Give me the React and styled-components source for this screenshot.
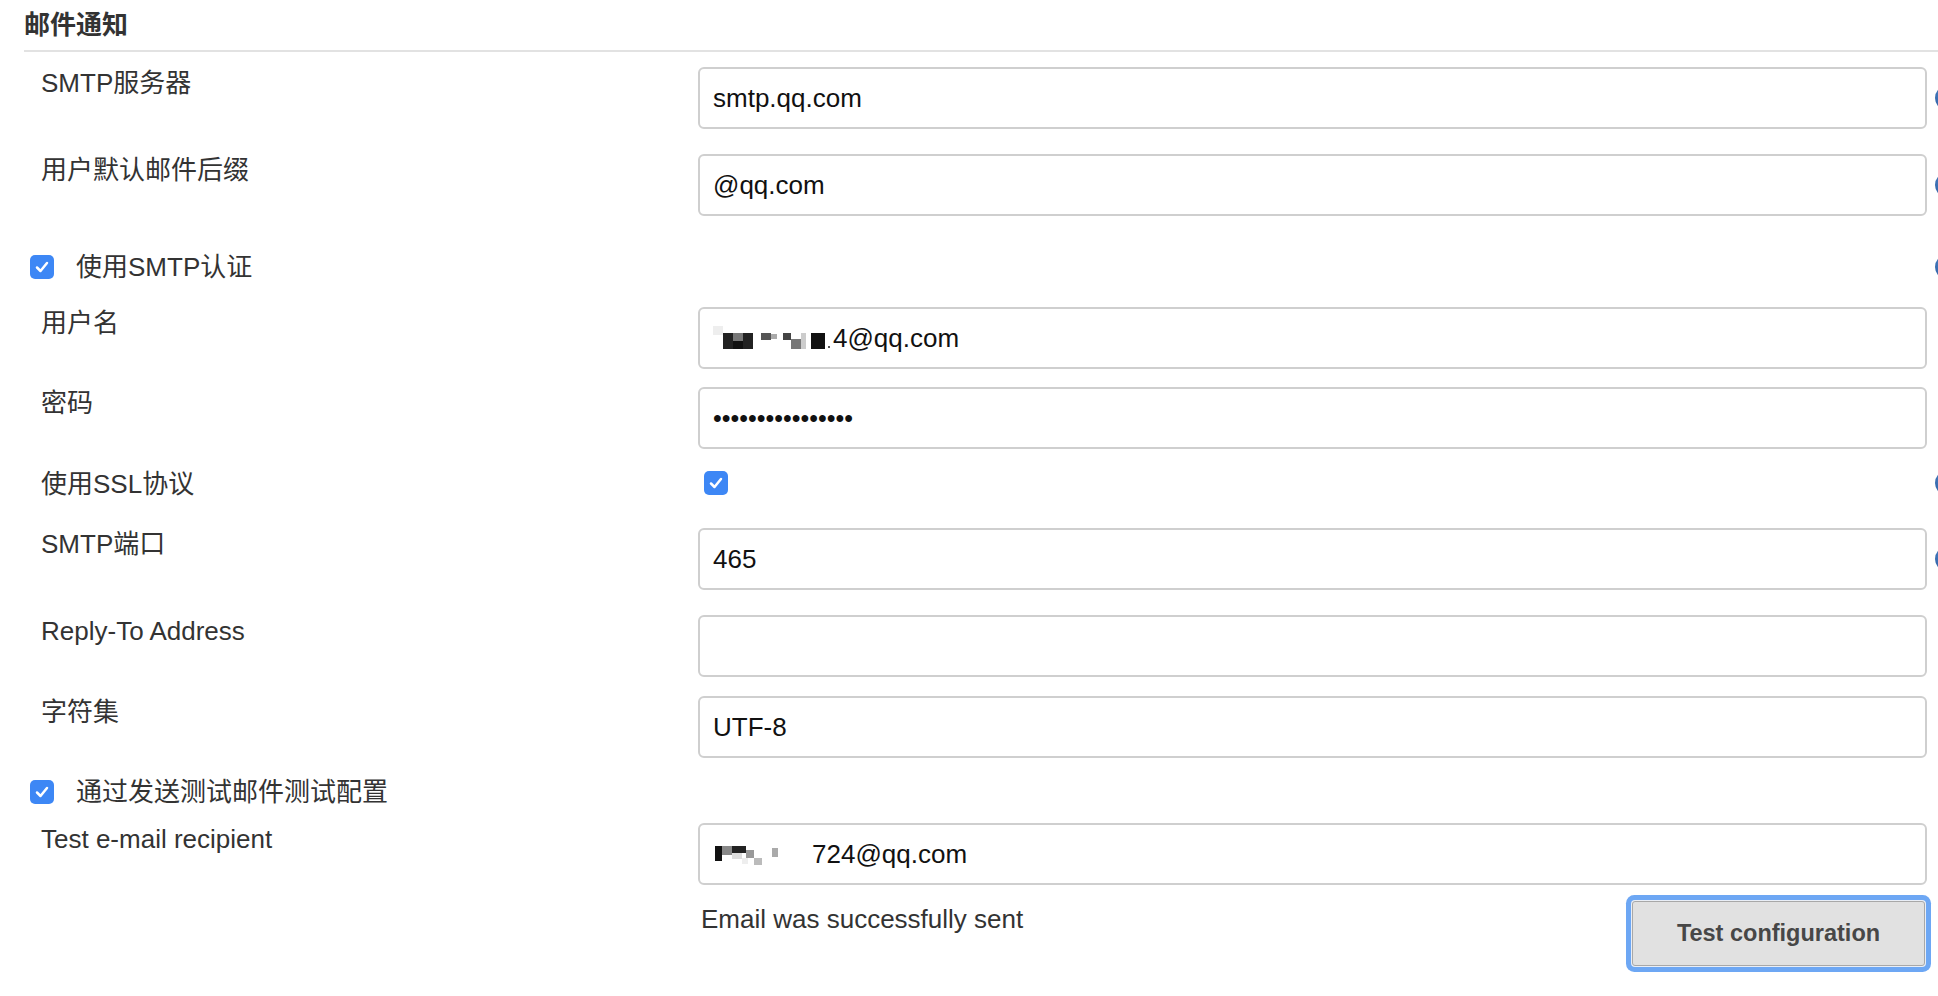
import React from 'react';
import styled, { createGlobalStyle } from 'styled-components';

const GlobalStyle = createGlobalStyle`
  html, body {
    margin: 0;
    padding: 0;
    background: #fff;
    overflow: hidden;
  }
  body {
    font-family: "Liberation Sans", "Noto Sans CJK SC", sans-serif;
    color: #333;
  }
`;

const Page = styled.div`
  width: 100%;
  padding: 0 0 40px 24px;
  box-sizing: border-box;
  overflow: hidden;
`;

const SectionTitle = styled.div`
  font-size: 26px;
  font-weight: bold;
  line-height: 34px;
  color: #333;
  padding: 8px 0 8px 0;
  border-bottom: 2px solid #e2e2e2;
`;

const Form = styled.div`
  padding-top: 15px;
  width: 1961px;
`;

const Row = styled.div`
  display: grid;
  grid-template-columns: 674px 1229px 34px;
  align-items: start;
  margin-bottom: ${p => p.$mb || 0}px;
`;

const Label = styled.div`
  padding: 1px 0 0 17px;
  font-size: 26px;
  line-height: 30px;
  color: #333;
  white-space: nowrap;
`;

const CheckLabel = styled.label`
  display: flex;
  align-items: center;
  gap: 22px;
  height: 30px;
  padding-left: 6px;
  font-size: 26px;
  line-height: 30px;
  color: #333;
  white-space: nowrap;
`;

const CheckCell = styled.div`
  display: flex;
  align-items: center;
  height: 30px;
  padding-left: 6px;
`;

const Box = styled.span`
  display: inline-flex;
  align-items: center;
  justify-content: center;
  width: 24px;
  height: 24px;
  border-radius: 5px;
  background: #3d87f5;
  flex: none;
`;

const Field = styled.div`
  display: flex;
  align-items: center;
  height: 62px;
  box-sizing: border-box;
  border: 2px solid #cfcfcf;
  border-radius: 6px;
  padding: 0 13px;
  font-size: 26px;
  color: #111;
  white-space: nowrap;
`;

const Dots = styled.span`
  font-size: 25px;
`;

const HelpIcon = styled.span`
  display: block;
  width: 26px;
  height: 26px;
  margin: ${p => p.$top || 18}px 0 0 8px;
  border-radius: 50%;
  background: radial-gradient(circle at 40% 35%, #4f86c9, #1f4f93);
`;

const ActionCell = styled.div`
  display: flex;
  justify-content: space-between;
  align-items: flex-start;
  padding-left: 3px;
`;

const Message = styled.div`
  margin-top: 8px;
  font-size: 26px;
  line-height: 30px;
  color: #333;
`;

const Button = styled.button`
  margin-top: 5px;
  width: 293px;
  height: 65px;
  margin-right: 2px;
  border: 1px solid #a8a8a8;
  border-radius: 3px;
  background: #e1e1e1;
  box-shadow: 0 0 0 1px #e9eef6, 0 0 0 6px #6da7f4;
  font-family: "Liberation Sans", sans-serif;
  font-size: 23.5px;
  font-weight: bold;
  color: #474747;
  cursor: pointer;
`;

const Check = () => (
  <Box>
    <svg width="16" height="16" viewBox="0 0 16 16">
      <path d="M3 8.5 L6.5 12 L13 4" fill="none" stroke="#fff" strokeWidth="2.5" strokeLinecap="round" strokeLinejoin="round" />
    </svg>
  </Box>
);

// pixelated redaction in front of the mail addresses
const UserMosaic = () => (
  <svg width="118" height="24" viewBox="0 0 118 24" style={{ marginRight: 2 }}>
    <rect x="0" y="0" width="10" height="9" fill="#eee" />
    <rect x="10" y="7" width="10" height="16" fill="#222" />
    <rect x="20" y="7" width="10" height="8" fill="#777" />
    <rect x="20" y="15" width="10" height="8" fill="#111" />
    <rect x="30" y="7" width="10" height="16" fill="#222" />
    <rect x="48" y="7" width="10" height="7" fill="#555" />
    <rect x="58" y="8" width="6" height="5" fill="#aaa" />
    <rect x="70" y="7" width="8" height="7" fill="#444" />
    <rect x="78" y="13" width="10" height="10" fill="#777" />
    <rect x="88" y="7" width="5" height="16" fill="#ccc" />
    <rect x="98" y="7" width="14" height="16" fill="#111" />
    <rect x="115" y="20" width="2" height="2" fill="#555" />
  </svg>
);

const MailMosaic = () => (
  <svg width="98" height="24" viewBox="0 0 98 24" style={{ marginRight: 1 }}>
    <rect x="2" y="4" width="7" height="15" fill="#111" />
    <rect x="9" y="4" width="10" height="9" fill="#888" />
    <rect x="19" y="4" width="14" height="7" fill="#222" />
    <rect x="19" y="11" width="10" height="6" fill="#ddd" />
    <rect x="33" y="8" width="8" height="8" fill="#999" />
    <rect x="41" y="16" width="8" height="7" fill="#bbb" />
    <rect x="29" y="16" width="6" height="6" fill="#eee" />
    <rect x="59" y="6" width="6" height="9" fill="#aaa" />
  </svg>
);

const TextRow = ({ label, children, help, mb }) => (
  <Row $mb={mb}>
    <Label>{label}</Label>
    <Field>{children}</Field>
    {help ? <HelpIcon /> : <span />}
  </Row>
);

export default function App() {
  return (
    <>
      <GlobalStyle />
      <Page>
        <SectionTitle>邮件通知</SectionTitle>
        <Form>
          <TextRow label="SMTP服务器" help mb={25}>smtp.qq.com</TextRow>
          <TextRow label="用户默认邮件后缀" help mb={36}>@qq.com</TextRow>

          <Row $mb={25}>
            <CheckLabel><Check />使用SMTP认证</CheckLabel>
            <span />
            <HelpIcon $top={2} />
          </Row>

          <TextRow label="用户名" mb={18}><UserMosaic />4@qq.com</TextRow>
          <TextRow label="密码" mb={19}><Dots>••••••••••••••••</Dots></TextRow>

          <Row $mb={29}>
            <Label>使用SSL协议</Label>
            <CheckCell><Check /></CheckCell>
            <HelpIcon $top={2} />
          </Row>

          <TextRow label="SMTP端口" help mb={25}>465</TextRow>
          <TextRow label="Reply-To Address" mb={19} />
          <TextRow label="字符集" mb={19}>UTF-8</TextRow>

          <Row $mb={16}>
            <CheckLabel><Check />通过发送测试邮件测试配置</CheckLabel>
          </Row>

          <TextRow label="Test e-mail recipient" mb={11}><MailMosaic />724@qq.com</TextRow>

          <Row>
            <span />
            <ActionCell>
              <Message>Email was successfully sent</Message>
              <Button type="button">Test configuration</Button>
            </ActionCell>
          </Row>
        </Form>
      </Page>
    </>
  );
}
